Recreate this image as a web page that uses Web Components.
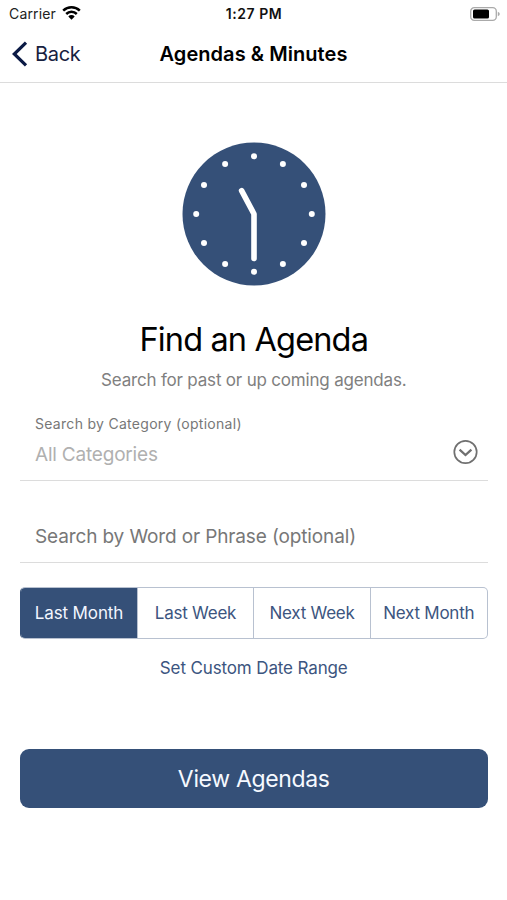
<!DOCTYPE html>
<html lang="en">
<head>
<meta charset="utf-8">
<title>Agendas &amp; Minutes</title>
<style>
body { margin: 0; background: #fff; font-family: Inter, "Liberation Sans", sans-serif; color: #000; }
</style>
</head>
<body>
<agenda-app></agenda-app>
<script>
function define(name, html) {
  const template = document.createElement('template');
  template.innerHTML = html;
  customElements.define(name, class extends HTMLElement {
    constructor() {
      super();
      this.attachShadow({ mode: 'open' }).append(template.content.cloneNode(true));
    }
  });
}

define('status-bar', `
<style>
:host { display: grid; grid-template-columns: 1fr auto 1fr; align-items: center; height: 28px; padding: 0 7px 0 9px; box-sizing: border-box; font-size: 14px; line-height: 20px; white-space: nowrap; }
.left { display: flex; align-items: center; gap: 6px; color: #222; letter-spacing: .15px; }
.time { font-weight: 600; font-size: 14px; letter-spacing: .55px; margin-left: -1px; color: #111; }
.right { display: flex; justify-content: flex-end; }
svg { display: block; }
.wifi { margin-top: -3px; }
.battery { margin-top: -1px; }
</style>
<div class="left"><span>Carrier</span>
<svg class="wifi" width="19" height="15" viewBox="0 0 19 15"><g fill="none" stroke="#000" stroke-width="2.5"><path d="M1.2 5.6A12 12 0 0 1 17.8 5.6"/><path d="M4.2 9A7.6 7.6 0 0 1 14.8 9"/></g><path d="M6.3 11.4A4.6 4.6 0 0 1 12.7 11.4L9.5 14.8Z"/></svg></div>
<span class="time">1:27 PM</span>
<div class="right"><svg class="battery" width="30" height="14" viewBox="0 0 30 14"><rect x=".7" y=".7" width="25.6" height="12.6" rx="3.6" fill="#fff" stroke="#aaa" stroke-width="1.3"/><rect x="3" y="2.4" width="16" height="9.2" rx="1.6"/><path d="M27.8 4.8Q29.8 5.5 29.8 7T27.8 9.2Z" fill="#aaa"/></svg></div>`);

define('nav-bar', `
<style>
:host { display: grid; grid-template-columns: 1fr auto 1fr; align-items: center; height: 55px; padding: 0 12px 2px; box-sizing: border-box; border-bottom: 1px solid #dcdcdc; font-size: 20px; line-height: 28px; white-space: nowrap; }
.back { display: flex; align-items: center; gap: 7px; color: #17213f; letter-spacing: -.3px; }
svg { display: block; }
.title { font-weight: 600; letter-spacing: .06px; }
</style>
<div class="back"><svg width="16" height="26" viewBox="0 0 16 26"><path d="M14 1.6L2.3 13L14 24.4" fill="none" stroke="#0b1a45" stroke-width="3.2"/></svg><span>Back</span></div>
<span class="title"><slot></slot></span><span></span>`);

define('clock-face', `
<style>:host { display: block; width: 144px; height: 144px; } svg { display: block; }</style>
<svg width="144" height="144" viewBox="-72 -72 144 144"><circle r="71.5" fill="#355078"/>
<g class="dots" fill="#fff"><circle cy="-57.8" r="3"/><circle cx="28.9" cy="-50" r="3"/><circle cx="50" cy="-28.9" r="3"/><circle cx="57.8" r="3"/><circle cx="50" cy="28.9" r="3"/><circle cx="28.9" cy="50" r="3"/><circle cy="57.8" r="3"/><circle cx="-28.9" cy="50" r="3"/><circle cx="-50" cy="28.9" r="3"/><circle cx="-57.8" r="3"/><circle cx="-50" cy="-28.9" r="3"/><circle cx="-28.9" cy="-50" r="3"/></g>
<path d="M-12.4 -23.4L0 0V44.5" fill="none" stroke="#fff" stroke-width="5.6" stroke-linecap="round" stroke-linejoin="round"/></svg>`);

define('page-intro', `
<style>
:host { display: flex; flex-direction: column; align-items: center; white-space: nowrap; }
h1 { margin: 34px 0 0; font-weight: 400; font-size: 32.5px; line-height: 40px; letter-spacing: -.85px; }
p { margin: 10px 0 0; font-size: 17px; line-height: 20px; letter-spacing: -.19px; color: #808080; }
</style>
<clock-face></clock-face><h1><slot name="title"></slot></h1><p><slot></slot></p>`);

define('select-field', `
<style>
:host { display: flex; align-items: center; justify-content: space-between; height: 68px; padding: 0 9px 0 15px; box-sizing: border-box; border-bottom: 1px solid #dcdcdc; white-space: nowrap; }
.label { font-size: 14px; line-height: 20px; letter-spacing: .29px; color: #777; }
.value { margin-top: 9px; font-size: 19px; line-height: 24px; letter-spacing: -.2px; color: #b0b0b0; }
.text { padding-bottom: 13px; }
svg { display: block; margin-top: 10px; }
</style>
<div class="text"><div class="label"><slot name="label"></slot></div><div class="value"><slot></slot></div></div>
<svg width="26" height="26" viewBox="0 0 26 26" fill="none" stroke="#707070"><circle cx="12.5" cy="13" r="11.2" stroke-width="1.7"/><path d="M6.6 10.6L12.5 16L18.4 10.6" stroke-width="2.3"/></svg>`);

define('text-field', `
<style>
:host { display: flex; align-items: center; height: 82px; padding: 31px 15px 0; box-sizing: border-box; border-bottom: 1px solid #dcdcdc; font-size: 19px; line-height: 24px; letter-spacing: -.13px; color: #777; white-space: nowrap; }
</style><slot></slot>`);

define('segment-item', `
<style>
:host { display: flex; align-items: center; justify-content: center; color: #3c5580; font-size: 17px; letter-spacing: -.24px; border-left: 1px solid #b8c1d0; }
:host(:first-child) { border-left: 0; }
:host([selected]) { background: #355078; color: #f2f6ff; letter-spacing: -.12px; }
</style><slot></slot>`);

define('segment-group', `
<style>
:host { display: grid; grid-template-columns: 116px 116px 117px 1fr; height: 52px; box-sizing: border-box; border: 1px solid #b8c1d0; border-left-color: #355078; border-radius: 5px; overflow: hidden; white-space: nowrap; }
</style><slot></slot>`);

define('link-button', `
<style>:host { display: block; text-align: center; color: #3c5580; font-size: 17px; line-height: 22px; letter-spacing: -.13px; }</style><slot></slot>`);

define('primary-button', `
<style>:host { display: flex; align-items: center; justify-content: center; height: 59px; box-sizing: border-box; border-radius: 9px; background: #355078; color: #f6f9ff; font-size: 23px; letter-spacing: -.34px; }</style><slot></slot>`);

define('agenda-app', `
<style>
:host { display: block; height: 900px; overflow: hidden; background: #fff; }
main { display: flex; flex-direction: column; padding: 59px 19.5px 0 20px; }
select-field { margin-top: 23px; }
segment-group { margin-top: 24px; }
link-button { margin-top: 18px; }
primary-button { margin-top: 70px; }
</style>
<status-bar></status-bar>
<nav-bar>Agendas &amp; Minutes</nav-bar>
<main>
<page-intro><span slot="title">Find an Agenda</span>Search for past or up coming agendas.</page-intro>
<select-field><span slot="label">Search by Category (optional)</span>All Categories</select-field>
<text-field>Search by Word or Phrase (optional)</text-field>
<segment-group><segment-item selected>Last Month</segment-item><segment-item>Last Week</segment-item><segment-item>Next Week</segment-item><segment-item>Next Month</segment-item></segment-group>
<link-button>Set Custom Date Range</link-button>
<primary-button>View Agendas</primary-button>
</main>`);
</script>
</body>
</html>
